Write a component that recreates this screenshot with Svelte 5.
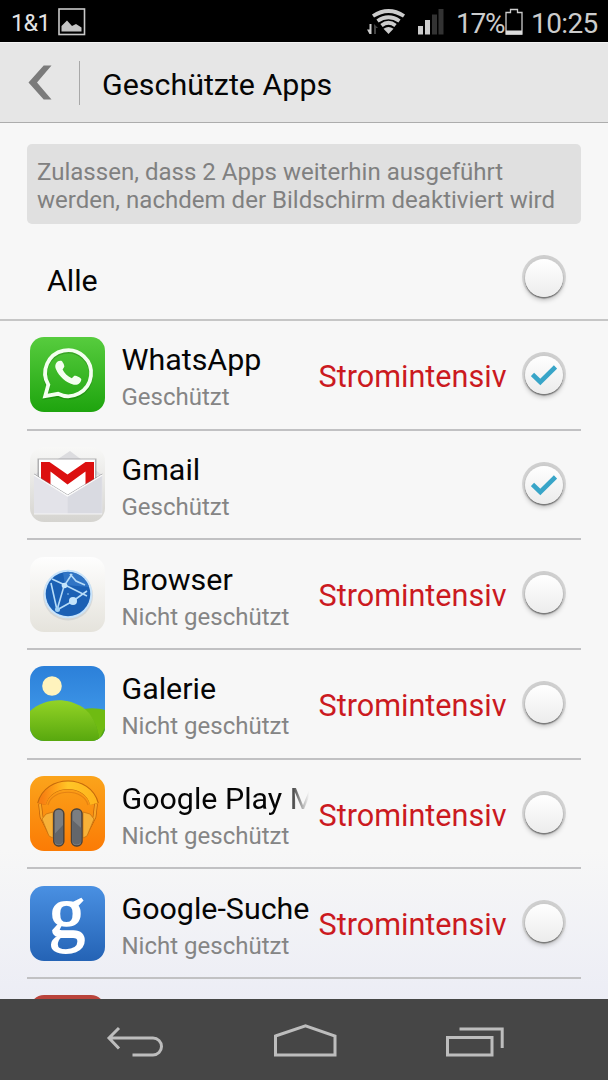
<script>
  let apps = $state([
    { name: "WhatsApp", icon: "whatsapp", guarded: true, intensive: true },
    { name: "Gmail", icon: "gmail", guarded: true, intensive: false },
    { name: "Browser", icon: "browser", guarded: false, intensive: true },
    { name: "Galerie", icon: "gallery", guarded: false, intensive: true },
    { name: "Google Play M", icon: "music", guarded: false, intensive: true, fade: true },
    { name: "Google-Suche", icon: "search", guarded: false, intensive: true },
    { name: "", icon: "next", guarded: false, intensive: false },
  ]);

  let count = $derived(apps.filter((a) => a.guarded).length);
  let all = $derived(apps.every((a) => a.guarded));

  function toggleAll() {
    const value = !all;
    apps.forEach((a) => (a.guarded = value));
  }
</script>

{#snippet check(on, toggle, label)}
  <button class="check" onclick={toggle} aria-label={label} aria-pressed={on}>
    <span class="knob">
      {#if on}
        <svg width="26" height="22" viewBox="0 0 26 22">
          <path d="M1.500 10.500 L9.300 18 L24.500 3" fill="none" stroke="#38a5c8" stroke-width="4.600" />
        </svg>
      {/if}
    </span>
  </button>
{/snippet}

{#snippet appIcon(kind)}
  <svg class="icon" viewBox="0 0 75 75">
    <defs>
      <clipPath id="tile"><rect width="75" height="75" rx="14" /></clipPath>
      <linearGradient id="green" x2="0" y2="1"><stop stop-color="#57cc3e" /><stop offset="1" stop-color="#1ea40e" /></linearGradient>
      <linearGradient id="paper" x2="0" y2="1"><stop stop-color="#f8f8f7" /><stop offset="1" stop-color="#d5d4d0" /></linearGradient>
      <linearGradient id="cream" x2="0" y2="1"><stop stop-color="#fefefe" /><stop offset="1" stop-color="#e5e3dc" /></linearGradient>
      <linearGradient id="sky" x2="0" y2="1"><stop stop-color="#2c80d9" /><stop offset=".6" stop-color="#3c94e6" /></linearGradient>
      <linearGradient id="hill" x2="0" y2="1"><stop stop-color="#93d326" /><stop offset="1" stop-color="#58a80e" /></linearGradient>
      <linearGradient id="orange" x2="0" y2="1"><stop stop-color="#fba41b" /><stop offset="1" stop-color="#fb7b05" /></linearGradient>
      <linearGradient id="band" x2="1" y2="0"><stop stop-color="#f77f12" /><stop offset=".28" stop-color="#ffa51a" /><stop offset=".5" stop-color="#ffc628" /><stop offset="1" stop-color="#ffb51c" /></linearGradient>
      <linearGradient id="blue" x2="0" y2="1"><stop stop-color="#4a90e2" /><stop offset="1" stop-color="#2463b5" /></linearGradient>
    </defs>
    <g clip-path="url(#tile)">
      {#if kind === "whatsapp"}
        <rect width="75" height="75" fill="url(#green)" />
        <path d="M18.300 49.300 A23 23 0 1 1 28 58.300 L15.200 60.500 Z" fill="none" stroke="#074b00" stroke-width="4" opacity=".25" />
        <path d="M18.300 47.800 A23 23 0 1 1 28 56.800 L15.200 59 Z" fill="none" stroke="#f4fff0" stroke-width="3.800" />
        <path d="M28 24.300 C25.500 26 24.600 29 26 32.300 C29 39.500 36.200 46 43.800 47.700 C47.800 48.500 51 46 51.300 42.200 C51.300 40.700 45.400 38.200 44.300 38.800 L41.800 41.200 C37.400 39.500 34.200 36 32.600 32.500 L34.300 29.800 C34.700 28.500 32.400 23.800 31.200 23.700 C30 23.500 28.800 23.700 28 24.300 Z" fill="#f4fff0" />
      {:else if kind === "gmail"}
        <rect width="75" height="75" fill="url(#paper)" />
        <path d="M4 28 L40 4 L72 28 Z" fill="#dcdcdf" />
        <rect x="7.500" y="11.500" width="59" height="42" fill="#8d8d91" opacity=".65" />
        <rect x="9" y="12.500" width="56" height="42" fill="#fff" />
        <path d="M11 15 H19.500 L37.500 27.500 L55.500 15 H64 V42 H55.500 V24.500 L37.500 37.500 L20.500 24.500 V42 H11 Z" fill="#dc1010" />
        <path d="M4 28 L37.700 49 L72.300 28 V67 H4 Z" fill="#e3e3e9" />
        <path d="M37.700 49 L71.700 28.800 V66.500 H37.700 Z" fill="#d9dae1" />
        <path d="M4 27 L37.700 48 L72.300 27" fill="none" stroke="#77777b" stroke-width="1" opacity=".6" />
        <path d="M4 28 L37.700 49 L72.300 28" fill="none" stroke="#fafafa" stroke-width="1.400" />
        <path d="M4 67 H72" stroke="#f4f4f4" />
      {:else if kind === "browser"}
        <rect width="75" height="75" fill="url(#cream)" />
        <circle cx="38" cy="38.500" r="25" fill="#c7c9cb" opacity=".6" />
        <circle cx="38" cy="37" r="24.300" fill="#c9e4fb" />
        <circle cx="38" cy="37" r="22.300" fill="#1b60b4" />
        <path d="M33 15.500 A22 22 0 0 1 59 30 L35 28 Z" fill="#4184d0" opacity=".6" />
        <g fill="none" stroke="#b5dbf8" stroke-width="1.600">
          <path d="M22 22 L35 28 L57 39" />
          <path d="M42 17 L34 29 L27 53" />
          <path d="M21 26 L27 53 L43 44 L57 34" />
          <path d="M40 17 L46 24 L55 28" />
        </g>
        <circle cx="34.500" cy="28.500" r="2.800" fill="#c4e4fb" />
        <circle cx="43" cy="44" r="4" fill="#c4e4fb" />
        <circle cx="27.500" cy="52.500" r="2.500" fill="#9fcff4" />
        <circle cx="38" cy="37" r=".8" fill="#9fcff4" />
      {:else if kind === "gallery"}
        <rect width="75" height="75" fill="url(#sky)" />
        <circle cx="22" cy="20" r="9.800" fill="#fff3bd" />
        <path d="M45 46 C56 41 67 42 75 44 V75 H45 Z" fill="#6fbb12" />
        <path d="M54 43 C62 49 68 60 69.500 75 H75 V62 C72 66 71 69 70 73 Z" fill="#368f10" opacity=".45" />
        <path d="M0 45 C15 31.500 37 31 53 41.500 C62 48 68 60 69.500 75 H0 Z" fill="url(#hill)" />
      {:else if kind === "music"}
        <rect width="75" height="75" fill="url(#orange)" />
        <path d="M11.500 28 C18 2.500 58 2.500 64.500 28" fill="none" stroke="#c46a0b" stroke-width="9" />
        <path d="M12 28 C18.500 3 57.500 3 64 28" fill="none" stroke="url(#band)" stroke-width="7.600" />
        <path d="M18 29 C22 12 54 12 58 29" fill="none" stroke="#e58212" stroke-width="1.200" />
        <path d="M10 28 L11.500 41 L20 58 M66 28 L64.500 41 L56 58" fill="none" stroke="#bd610b" stroke-width="3.600" />
        <path d="M10 28 L11.500 41 L20 58 M66 28 L64.500 41 L56 58" fill="none" stroke="#f9a626" stroke-width="2.200" />
        <path d="M12 43 L16 38 L23 36 V62 L19 60 Z M64 43 L60 38 L53 36 V62 L57 60 Z" fill="#f7b138" stroke="#c9740f" stroke-width=".8" />
        <rect x="23.800" y="33" width="10" height="37" rx="4.800" fill="#7b7e82" stroke="#4a433c" stroke-width="1.500" />
        <rect x="41.500" y="33" width="10.500" height="37" rx="4.800" fill="#7b7e82" stroke="#4a433c" stroke-width="1.500" />
        <path d="M24.600 58 L33 49 V66 Q29 71 24.600 66 Z M42.300 44 L51.200 52 V66 Q46.500 71 42.300 66 Z" fill="#63666b" />
      {:else if kind === "search"}
        <rect width="75" height="75" fill="url(#blue)" />
        <text class="g" x="37" y="51" text-anchor="middle">g</text>
      {:else}
        <rect width="75" height="75" fill="#b9433b" />
      {/if}
    </g>
  </svg>
{/snippet}

<div class="screen">
  <div class="status">
    <span class="carrier">1&amp;1</span>
    <svg width="28" height="28" viewBox="0 0 28 28">
      <rect x="1" y="1" width="25.500" height="25.500" fill="none" stroke="#c9c9c9" stroke-width="1.600" />
      <path d="M3.500 23.500 V18 L9 12.500 L14 18 L18 16 L23.500 19.500 V23.500 Z" fill="#c4c4c4" />
    </svg>
    <span class="grow"></span>
    <svg class="signals" width="80" height="30" viewBox="0 0 80 30">
      <path d="M4.500 17 V27 H2.500 L0 22.500 H2.500 V17 Z" fill="#ccc" />
      <path d="M7 27 V17 L11 21 H9 V27 Z" fill="#444" />
      <g fill="none" stroke="#ccc" stroke-width="3.800">
        <path d="M6 9 Q21.500 -1 37 9" />
        <path d="M10.500 14 Q21.500 6.500 32.500 14" />
        <path d="M14.500 18.500 Q21.500 13 28.500 18.500" />
      </g>
      <path d="M21.500 27 L16.500 21.800 Q21.500 18.200 26.500 21.800 Z" fill="#ccc" />
      <path d="M51 19 h5 v8.500 h-5 Z M58 13 h5 v14.500 h-5 Z" fill="#ccc" />
      <path d="M65 7.500 h5 v20 h-5 Z M71.500 2 h5 v25.500 h-5 Z" fill="#333" />
    </svg>
    <span class="percent">17%</span>
    <svg width="18" height="28" viewBox="0 0 18 28">
      <path d="M1 4.500 H5.500 V1.500 H12.500 V4.500 H17 V26 H1 Z" fill="none" stroke="#ccc" stroke-width="1.300" />
      <rect x="1" y="22.500" width="16" height="4" fill="#ddd" />
    </svg>
    <span class="clock">10:25</span>
  </div>

  <header>
    <svg width="24" height="36" viewBox="0 0 24 36">
      <path d="M15.700 0.500 H23.500 L9 17.500 L23.500 34.500 H15.700 L0.500 17.500 Z" fill="#7b7b7b" />
    </svg>
    <h1>Geschützte Apps</h1>
  </header>

  <main>
    <p class="hint">
      Zulassen, dass {count} Apps weiterhin ausgeführt<br />
      werden, nachdem der Bildschirm deaktiviert wird
    </p>
    <div class="all">
      <span class="name">Alle</span>
      {@render check(all, toggleAll, "Alle")}
    </div>
    {#each apps as app}
      <div class="row">
        {@render appIcon(app.icon)}
        {#if app.name}
          <div class="info">
            <div class="name" class:fade={app.fade}>{app.name}</div>
            <div class="state">{app.guarded ? "Geschützt" : "Nicht geschützt"}</div>
          </div>
          <span class="warn">{app.intensive ? "Stromintensiv" : ""}</span>
          {@render check(app.guarded, () => (app.guarded = !app.guarded), app.name)}
        {/if}
      </div>
    {/each}
  </main>

  <nav>
    <svg width="58" height="36" viewBox="0 0 58 36">
      <path d="M13 5 L3 15 L13 25.500 M3 15 H47 A8.500 8.500 0 0 1 47 32 H26.500" fill="none" stroke="#bdbdbd" stroke-width="3" />
    </svg>
    <svg width="64" height="36" viewBox="0 0 64 36">
      <path d="M2.500 13 L32.500 2.800 L62 13 V32 H2.500 Z" fill="none" stroke="#bdbdbd" stroke-width="3" />
    </svg>
    <svg width="60" height="36" viewBox="0 0 60 36">
      <path d="M2.500 14.500 H47 V32 H2.500 Z M14.500 6 H57.200 V25" fill="none" stroke="#bdbdbd" stroke-width="3" />
    </svg>
  </nav>
</div>

<style>
  :global(body) {
    background: #000;
  }

  .screen {
    width: 608px;
    height: 1080px;
    display: flex;
    flex-direction: column;
    overflow: hidden;
    font-family: Roboto, sans-serif;
    color: #050505;
  }

  .status {
    height: 42px;
    flex: none;
    display: flex;
    align-items: center;
    box-sizing: border-box;
    padding: 1px 10px 0 11px;
    background: #000;
    color: #ccc;
  }

  .carrier {
    font-size: 23.500px;
    letter-spacing: -0.700px;
    color: #e4e4e4;
    width: 47px;
    padding-top: 2px;
  }

  .grow {
    flex: 1;
  }

  .signals {
    margin-right: 9px;
  }

  .percent {
    font-size: 28px;
    letter-spacing: -1.200px;
    width: 49px;
    padding-top: 3px;
  }

  .clock {
    font-size: 28px;
    letter-spacing: -0.600px;
    width: 67px;
    margin-left: 8px;
    padding-top: 3px;
  }

  header {
    height: 81px;
    flex: none;
    box-sizing: border-box;
    display: flex;
    align-items: center;
    padding-left: 28px;
    background: #e6e6e6;
    border-top: 1px solid #f4f4f4;
    border-bottom: 1px solid #adadad;
  }

  h1 {
    margin: 0 0 0 27px;
    padding: 4px 0 0 22px;
    border-left: 1px solid #a8a8a8;
    height: 40px;
    line-height: 40px;
    font-size: 30.400px;
    font-weight: 400;
  }

  main {
    flex: 1;
    min-height: 0;
    overflow: hidden;
    background: linear-gradient(#f7f7f7 83%, #ecedf5);
  }

  .hint {
    margin: 21px 27px 0;
    height: 80px;
    box-sizing: border-box;
    padding: 14px 0 0 10px;
    border-radius: 5px;
    background: #e0e0e0;
    color: #808080;
    font-size: 24.050px;
    line-height: 28px;
    white-space: nowrap;
  }

  .all {
    height: 97px;
    box-sizing: border-box;
    display: flex;
    align-items: center;
    justify-content: space-between;
    padding: 12px 42px 0 47px;
    border-bottom: 2px solid #c6c6c6;
  }

  .all .name {
    padding-top: 7px;
  }

  .row {
    height: 109.700px;
    box-sizing: border-box;
    display: flex;
    align-items: center;
    margin: 0 27px;
    padding: 0 15px 0 3px;
    border-bottom: 2px solid #c1c1c3;
  }

  .icon {
    width: 75px;
    height: 75px;
    flex: none;
  }

  .g {
    font: 73px "Liberation Serif", serif;
    fill: #fff;
    stroke: #fff;
    stroke-width: 1.800px;
  }

  .info {
    width: 187px;
    margin: 7px 10px 0 16.500px;
  }

  .name {
    font-size: 30.400px;
    line-height: 38px;
    white-space: nowrap;
    overflow: hidden;
  }

  .fade {
    mask-image: linear-gradient(to right, #000 88%, transparent);
  }

  .state {
    font-size: 24px;
    line-height: 36px;
    color: #858585;
  }

  .warn {
    flex: 1;
    padding-top: 3px;
    font-size: 30.600px;
    color: #cb1a1f;
  }

  .check {
    width: 44px;
    height: 44px;
    flex: none;
    display: flex;
    justify-content: center;
    align-items: center;
    margin-top: -2px;
    padding: 2px 0 0;
    border: none;
    border-radius: 50%;
    background: linear-gradient(#cdcdcd, #dcdcdc 55%, #efefef);
  }

  .knob {
    width: 38px;
    height: 38px;
    display: flex;
    align-items: center;
    justify-content: center;
    border-radius: 50%;
    background: linear-gradient(#fff, #ececec);
    box-shadow: 0 1.500px 1px #777, 0 3px 5px rgba(0, 0, 0, 0.25);
  }

  nav {
    height: 81px;
    flex: none;
    box-sizing: border-box;
    display: flex;
    justify-content: space-between;
    padding: 24px 103px 0 106px;
    background: #464646;
  }
</style>
